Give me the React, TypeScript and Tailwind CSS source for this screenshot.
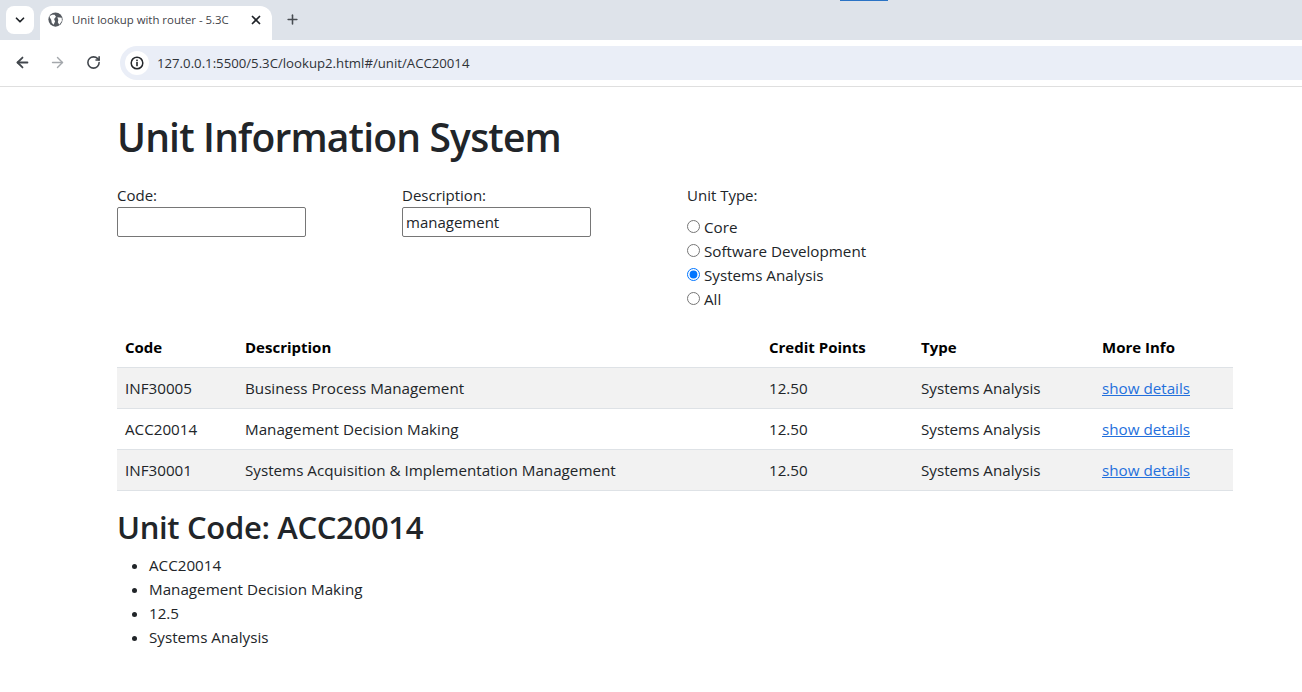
import React from "react";
import { Plus, X, ChevronDown, ArrowLeft, ArrowRight, RotateCw } from "lucide-react";

const rows = [
  ["INF30005", "Business Process Management"],
  ["ACC20014", "Management Decision Making"],
  ["INF30001", "Systems Acquisition & Implementation Management"],
];
const types = ["Core", "Software Development", "Systems Analysis", "All"];

export default function App() {
  return (
    <div className="h-[692px] w-[1302px] overflow-hidden bg-white text-[15.2px] leading-6 text-[#212529] [font-family:'Open_Sans',sans-serif]">
      {/* Tab strip */}
      <div className="relative flex h-10 bg-[#dee3ea] pl-[6px] pt-[6px]">
        <div className="flex h-[28px] w-[28px] items-center justify-center rounded-lg bg-white">
          <ChevronDown size={14} strokeWidth={3} className="text-[#1f2328]" />
        </div>
        <div className="ml-[6px] flex h-[34px] w-[232px] items-start rounded-t-xl bg-white pl-[8px] pr-[9px] pt-[6px]">
          <svg width="15" height="15" viewBox="0 0 16 16" className="shrink-0">
            <circle cx="8" cy="8" r="7.6" fill="#54595f" />
            <path d="M1.5 5 C3 3 5 2.5 7 3 L8.5 5 L6.5 7.5 L7.5 10 L6 13.5 L4 11.5 L3.5 8.5Z M10 5.5 L14.6 6 L14.8 9.5 L12 13.5 L10.5 11 L11 8.5Z" fill="#fff" />
          </svg>
          <span className="ml-[9px] flex-1 whitespace-nowrap text-[11.4px] leading-4 text-[#3f444a]">Unit lookup with router - 5.3C</span>
          <X size={14} strokeWidth={3} className="mt-px text-[#1f2328]" />
        </div>
        <Plus size={15} strokeWidth={2.5} className="ml-[13px] mt-[6px] text-[#474c52]" />
        <div className="absolute left-[840px] top-0 h-px w-[48px] bg-[#2a73c5]" />
      </div>
      {/* Toolbar */}
      <div className="flex h-[47px] items-center border-b border-[#dfdfdf] bg-white pb-[1px]">
        <ArrowLeft size={17} strokeWidth={2.5} className="ml-[14px] text-[#41464c]" />
        <ArrowRight size={17} strokeWidth={2} className="ml-[18px] text-[#a4a8ac]" />
        <RotateCw size={15} strokeWidth={2.5} className="ml-[20px] text-[#41464c]" />
        <div className="ml-[19px] flex h-[34px] flex-1 items-center rounded-l-full bg-[#eaeef7] pl-[5px]">
          <div className="flex h-6 w-6 items-center justify-center rounded-full bg-white">
            <svg width="14" height="14" viewBox="0 0 14 14" fill="none">
              <circle cx="7" cy="7" r="5.8" stroke="#24272b" strokeWidth="1.5" />
              <rect x="6.2" y="6" width="1.6" height="4.2" fill="#24272b" />
              <rect x="6.2" y="3.6" width="1.6" height="1.6" fill="#24272b" />
            </svg>
          </div>
          <span className="ml-[8px] text-[13.2px] leading-5 text-[#2f3338]">127.0.0.1:5500/5.3C/lookup2.html#/unit/ACC20014</span>
        </div>
      </div>
      {/* Page */}
      <main className="ml-[117px] w-[1116px]">
        <h1 className="mt-[26px] text-[39px] font-semibold leading-[48px] tracking-[-0.82px]">Unit Information System</h1>
        <div className="mt-[22px] flex h-[144px]">
          <div className="w-[285px]">
            <label className="block text-[15px]">Code:</label>
            <input className="block h-[30px] w-[189px] rounded-[2px] border border-[#767676] bg-white px-[3px] text-[15px] outline-none" defaultValue="" />
          </div>
          <div className="w-[285px]">
            <label className="block text-[15px]">Description:</label>
            <input className="block h-[30px] w-[189px] rounded-[2px] border border-[#767676] bg-white px-[3px] text-[15px] outline-none" defaultValue="management" />
          </div>
          <div>
            <div className="text-[15px]">Unit Type:</div>
            <div className="mt-2">
              {types.map((t) => (
                <label key={t} className="flex h-6 items-center gap-[4px]">
                  <input type="radio" name="unitType" defaultChecked={t === "Systems Analysis"} className="m-0 mb-[2px] h-[13px] w-[13px] accent-[#0075ff]" />
                  {t}
                </label>
              ))}
            </div>
          </div>
        </div>
        <table className="w-full border-collapse">
          <thead>
            <tr className="h-[40px] border-b border-[#dee2e6] text-left text-[15px] text-black">
              <th className="w-[120px] pl-2 font-bold">Code</th>
              <th className="w-[524px] pl-2 font-bold">Description</th>
              <th className="w-[152px] pl-2 font-bold">Credit Points</th>
              <th className="w-[181px] pl-2 font-bold">Type</th>
              <th className="pl-2 font-bold">More Info</th>
            </tr>
          </thead>
          <tbody>
            {rows.map(([c, d], i) => (
              <tr key={c} className={`h-[41px] border-b border-[#dee2e6] ${i % 2 === 0 ? "bg-[#f2f2f2]" : "bg-white"}`}>
                <td className="pl-2">{c}</td>
                <td className="pl-2">{d}</td>
                <td className="pl-2">12.50</td>
                <td className="pl-2">Systems Analysis</td>
                <td className="pl-2"><a href="#" className="text-[#2470dc] underline">show details</a></td>
              </tr>
            ))}
          </tbody>
        </table>
        <h2 className="mt-[17px] text-[31px] font-semibold leading-[38px] tracking-[-0.33px]">Unit Code: ACC20014</h2>
        <ul className="mt-[7px] list-disc pl-8">
          <li>ACC20014</li>
          <li>Management Decision Making</li>
          <li>12.5</li>
          <li>Systems Analysis</li>
        </ul>
      </main>
    </div>
  );
}
